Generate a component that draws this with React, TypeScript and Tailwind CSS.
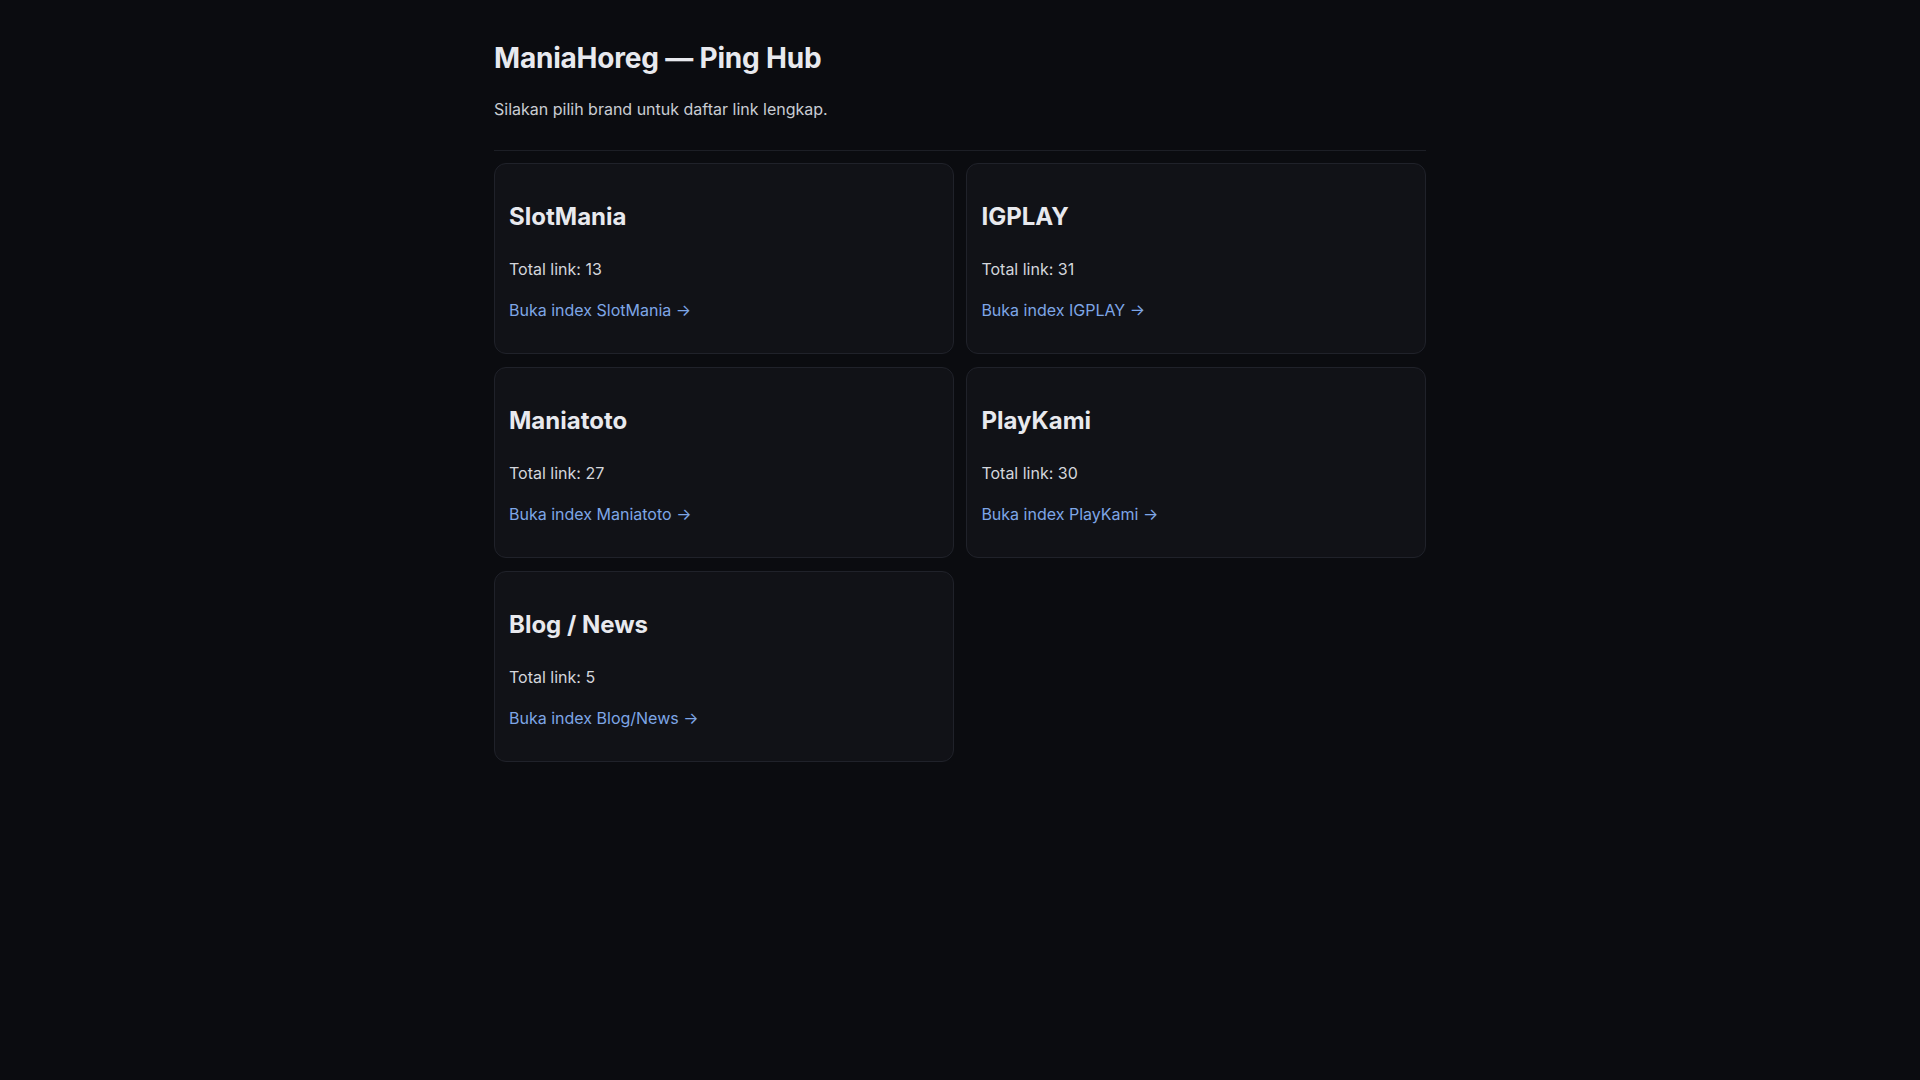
const BRANDS = [
  { name: "SlotMania", total: 13, label: "SlotMania" },
  { name: "IGPLAY", total: 31, label: "IGPLAY" },
  { name: "Maniatoto", total: 27, label: "Maniatoto" },
  { name: "PlayKami", total: 30, label: "PlayKami" },
  { name: "Blog / News", total: 5, label: "Blog/News" },
];

export default function App() {
  return (
    <div className="min-h-screen bg-[#0b0c10] font-['Inter',sans-serif] text-[#e6e8ee]">
      <main className="max-w-[980px] mx-auto px-6 pt-[41px] pb-10">
        <h1 className="text-[28px] leading-[34px] font-bold tracking-[-0.2px] text-[#e8e9ee]">
          ManiaHoreg — Ping Hub
        </h1>
        <p className="mt-[22px] text-base leading-6 text-[#c9ccd3]">
          Silakan pilih brand untuk daftar link lengkap.
        </p>
        <hr className="mt-[29px] border-0 border-t border-[#1d1f26]" />

        <div className="mt-3 grid grid-cols-2 gap-[12.8px]">
          {BRANDS.map((b) => (
            <div
              key={b.name}
              className="rounded-xl border border-[#20222a] bg-[#111217] px-[14px] pt-[39px] pb-[31px]"
            >
              <h2 className="text-2xl leading-7 font-bold text-[#e8e9ee]">
                {b.name}
              </h2>
              <p className="mt-[26px] text-base leading-6 text-[#d4d6dc]">
                Total link: {b.total}
              </p>
              <a
                href="#"
                className="mt-[17px] block text-base leading-6 text-[#7ea6e6] no-underline"
              >
                Buka index {b.label} →
              </a>
            </div>
          ))}
        </div>
      </main>
    </div>
  );
}
